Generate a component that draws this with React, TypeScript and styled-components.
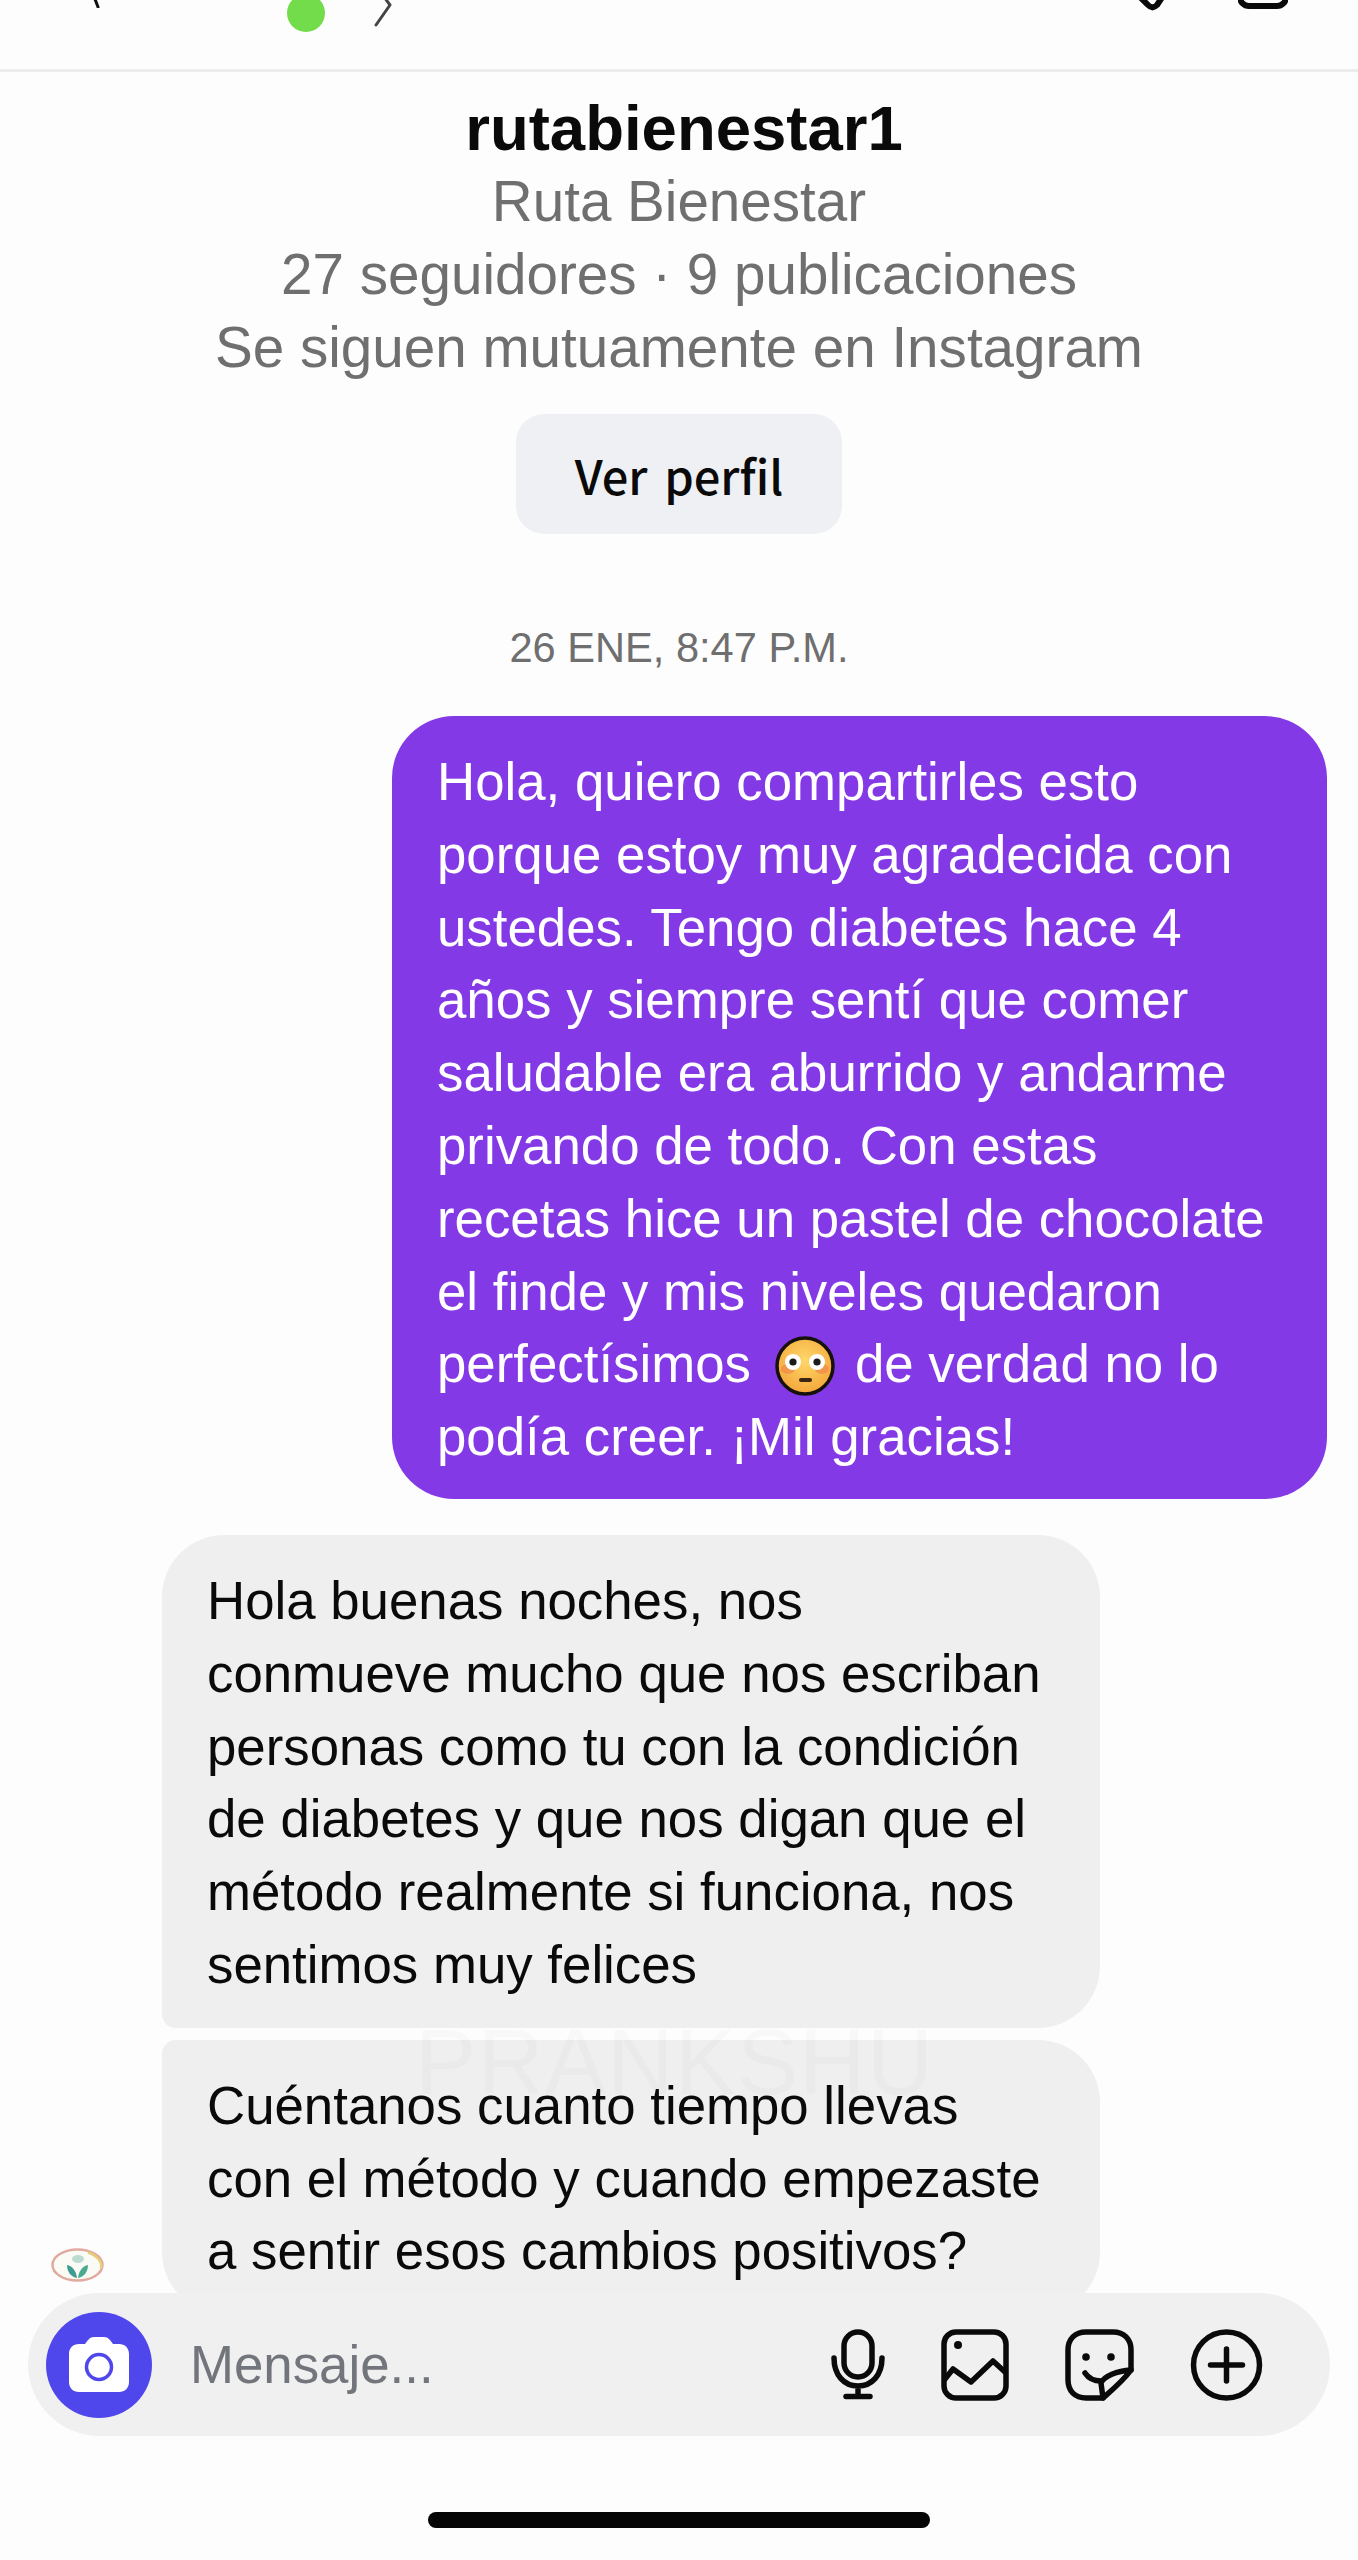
import styled, { createGlobalStyle } from "styled-components";

const colors = {
  page: "#fdfdfd",
  purple: "#8439e6",
  bubble: "#efefef",
  composer: "#f0f0f0",
  button: "#eff0f3",
  muted: "#6f6f6f",
  placeholder: "#73757c",
  camera: "#4f46ec",
  ink: "#0a0a0a",
};

const GlobalStyle = createGlobalStyle`
  html, body {
    margin: 0;
    padding: 0;
    background: ${colors.page};
  }
  * { box-sizing: border-box; }
`;

const Page = styled.div`
  width: 1358px;
  height: 2560px;
  overflow: hidden;
  display: flex;
  flex-direction: column;
  background: ${colors.page};
  font-family: "Liberation Sans", Arial, sans-serif;
  color: ${colors.ink};
`;

const TopBar = styled.header`
  height: 72px;
  flex-shrink: 0;
  border-bottom: 3px solid #ececec;
  display: flex;
  align-items: flex-start;
  overflow: hidden;
  padding-left: 90px;
  padding-right: 70px;
`;

const BackMark = styled.svg`
  margin-top: -20px;
  width: 16px;
  height: 28px;
`;

const GreenDot = styled.span`
  width: 38px;
  height: 38px;
  margin-left: 181px;
  margin-top: -6px;
  border-radius: 50%;
  background: #72dc4a;
`;

const Chevron = styled.svg`
  width: 20px;
  height: 44px;
  margin-left: 48px;
  margin-top: -17px;
`;

const TopIcons = styled.div`
  margin-left: auto;
  display: flex;
  gap: 68px;
`;

const TopIcon = styled.svg`
  width: 50px;
  height: 50px;
  margin-top: -39px;
`;

const Profile = styled.section`
  display: flex;
  flex-direction: column;
  align-items: center;
  padding-top: 20px;
`;

const Username = styled.h1`
  margin: 0 0 0 10px;
  font-size: 63.5px;
  line-height: 73px;
  font-weight: 700;
`;

const ProfileLine = styled.div`
  font-size: 56.6px;
  line-height: 73px;
  color: ${colors.muted};
`;

const ProfileButton = styled.button`
  margin-top: 30px;
  width: 326px;
  height: 120px;
  border: 0;
  border-radius: 28px;
  background: ${colors.button};
  color: ${colors.ink};
  font-family: "Noto Sans CJK KR", "Noto Sans", sans-serif;
  font-size: 47px;
  font-weight: 500;
  word-spacing: 6px;
`;

const Timestamp = styled.div`
  margin-top: 88px;
  text-align: center;
  font-size: 41.6px;
  line-height: 52px;
  color: ${colors.muted};
`;

const Thread = styled.main`
  margin-top: 42px;
  padding: 0 31px 0 162px;
  display: flex;
  flex-direction: column;
`;

const Bubble = styled.div<{ $mine?: boolean; $shape: string; $top: number; $bottom: number }>`
  position: relative;
  width: ${(p) => (p.$mine ? "935px" : "938px")};
  align-self: ${(p) => (p.$mine ? "flex-end" : "flex-start")};
  padding: ${(p) => p.$top}px 20px ${(p) => p.$bottom}px 45px;
  border-radius: ${(p) => p.$shape};
  background: ${(p) => (p.$mine ? colors.purple : colors.bubble)};
  color: ${(p) => (p.$mine ? "#ffffff" : colors.ink)};
  font-size: 52.8px;
  line-height: 72.8px;
  white-space: nowrap;
  margin-top: ${(p) => (p.$mine ? 0 : 12)}px;
`;

const MineBubble = styled(Bubble)`
  margin-bottom: 24px;
`;

const Watermark = styled.span`
  position: absolute;
  left: 253px;
  top: -24px;
  font-size: 92px;
  line-height: 92px;
  letter-spacing: 1px;
  color: rgba(0, 0, 0, 0.02);
  pointer-events: none;
`;

const Flushed = styled.svg`
  width: 60px;
  height: 60px;
  vertical-align: -14px;
  margin: 0 20px 0 24px;
`;

const Avatar = styled.svg`
  position: absolute;
  left: -112px;
  bottom: 31px;
  width: 55px;
  height: 36px;
`;

const Composer = styled.footer`
  position: relative;
  margin: -21px 28px 0;
  height: 143px;
  flex-shrink: 0;
  border-radius: 72px;
  background: ${colors.composer};
  display: flex;
  align-items: center;
  padding-left: 18px;
`;

const CameraButton = styled.div`
  width: 106px;
  height: 106px;
  border-radius: 50%;
  background: ${colors.camera};
  display: flex;
  align-items: center;
  justify-content: center;
`;

const Placeholder = styled.span`
  margin-left: 38px;
  font-size: 52.8px;
  color: ${colors.placeholder};
`;

const ComposerIcons = styled.div`
  margin-left: auto;
  margin-right: 67px;
  display: flex;
  align-items: center;
  gap: 56px;
`;

const ComposerIcon = styled.svg<{ $w: number }>`
  width: ${(p) => p.$w}px;
  height: 72px;
  fill: none;
  stroke: ${colors.ink};
  stroke-width: 5.5;
  stroke-linecap: round;
  stroke-linejoin: round;
`;

const HomeBar = styled.div`
  margin: 76px auto 0;
  width: 502px;
  height: 16px;
  border-radius: 8px;
  background: #050505;
`;

export default function App() {
  return (
    <Page>
      <GlobalStyle />
      <TopBar>
        <BackMark viewBox="0 0 16 28" fill="none" stroke="#111" strokeWidth="3" strokeLinecap="round">
          <path d="M14 1 3 14l5 13" />
        </BackMark>
        <GreenDot />
        <Chevron viewBox="0 0 20 44" fill="none" stroke="#444" strokeWidth="3" strokeLinecap="round" strokeLinejoin="round">
          <path d="M3 3 17 22 3 42" />
        </Chevron>
        <TopIcons>
          <TopIcon viewBox="0 0 50 50" fill="none" stroke="#0a0a0a" strokeWidth="6">
            <path d="M8 24 28 44c3 3 6 3 9 0l6-9" />
          </TopIcon>
          <TopIcon viewBox="0 0 50 50" fill="none" stroke="#0a0a0a" strokeWidth="6">
            <rect x="2" y="3" width="46" height="42" rx="9" />
          </TopIcon>
        </TopIcons>
      </TopBar>

      <Profile>
        <Username>rutabienestar1</Username>
        <ProfileLine>Ruta Bienestar</ProfileLine>
        <ProfileLine>27 seguidores · 9 publicaciones</ProfileLine>
        <ProfileLine>Se siguen mutuamente en Instagram</ProfileLine>
        <ProfileButton>Ver perfil</ProfileButton>
      </Profile>

      <Timestamp>26 ENE, 8:47 P.M.</Timestamp>

      <Thread>
        <MineBubble $mine $shape="62px" $top={30} $bottom={25}>
          Hola, quiero compartirles esto
          <br />
          porque estoy muy agradecida con
          <br />
          ustedes. Tengo diabetes hace 4
          <br />
          años y siempre sentí que comer
          <br />
          saludable era aburrido y andarme
          <br />
          privando de todo. Con estas
          <br />
          recetas hice un pastel de chocolate
          <br />
          el finde y mis niveles quedaron
          <br />
          perfectísimos
          <Flushed viewBox="0 0 60 60" role="img" aria-label="cara sonrojada">
            <defs>
              <radialGradient id="faceFill" cx="50%" cy="40%" r="60%">
                <stop offset="0%" stopColor="#ffd76a" />
                <stop offset="100%" stopColor="#f3a63a" />
              </radialGradient>
            </defs>
            <circle cx="30" cy="30" r="28" fill="url(#faceFill)" stroke="#17110c" strokeWidth="3.5" />
            <ellipse cx="13" cy="33" rx="7" ry="5" fill="#ef7a4a" opacity="0.55" />
            <ellipse cx="47" cy="33" rx="7" ry="5" fill="#ef7a4a" opacity="0.55" />
            <circle cx="18" cy="26" r="8" fill="#fff" />
            <circle cx="42" cy="26" r="8" fill="#fff" />
            <circle cx="18" cy="26" r="3.6" fill="#1a1a1a" />
            <circle cx="42" cy="26" r="3.6" fill="#1a1a1a" />
            <rect x="24" y="42" width="13" height="4" rx="2" fill="#3b2412" />
          </Flushed>
          de verdad no lo
          <br />
          podía creer. ¡Mil gracias!
        </MineBubble>

        <Bubble $shape="62px 62px 62px 14px" $top={30} $bottom={26}>
          Hola buenas noches, nos
          <br />
          conmueve mucho que nos escriban
          <br />
          personas como tu con la condición
          <br />
          de diabetes y que nos digan que el
          <br />
          método realmente si funciona, nos
          <br />
          sentimos muy felices
        </Bubble>

        <Bubble $shape="14px 62px 62px 62px" $top={30} $bottom={26}>
          <Watermark>PRANKSHU</Watermark>
          Cuéntanos cuanto tiempo llevas
          <br />
          con el método y cuando empezaste
          <br />a sentir esos cambios positivos?
          <Avatar viewBox="0 0 55 36" role="img" aria-label="avatar">
            <ellipse cx="27.5" cy="18" rx="25" ry="15.5" fill="#fbfbf6" stroke="#e2a9a0" strokeWidth="2.5" />
            <path d="M38 5.5a25 15.5 0 0 1 13 16" fill="none" stroke="#e5cf78" strokeWidth="2.5" />
            <path d="M27 31c-5-1-10-5-10-13 5 1 9 5 10 13Z" fill="#3f9c93" />
            <path d="M28 31c5-1 10-5 10-13-5 1-9 5-10 13Z" fill="#4aa98f" />
            <ellipse cx="28" cy="12" rx="6" ry="4" fill="#bcdcd2" />
          </Avatar>
        </Bubble>
      </Thread>

      <Composer>
        <CameraButton>
          <svg width="60" height="55" viewBox="0 0 60 55">
            <path
              d="M10 7h6l3-4c2-2 3-3 6-3h10c3 0 4 1 6 3l3 4h6c6 0 10 4 10 10v28c0 6-4 10-10 10H10C4 55 0 51 0 45V17C0 11 4 7 10 7Z"
              fill="#fff"
            />
            <circle cx="30" cy="30" r="12.5" fill="none" stroke={colors.camera} strokeWidth="3.5" />
          </svg>
        </CameraButton>
        <Placeholder>Mensaje...</Placeholder>
        <ComposerIcons>
          <ComposerIcon $w={54} viewBox="0 0 54 72">
            <rect x="13" y="3" width="28" height="45" rx="14" />
            <path d="M3 29c0 17 10 28 24 28s24-11 24-28M27 57v10M15 67.5h24" />
          </ComposerIcon>
          <ComposerIcon $w={68} viewBox="0 0 68 72">
            <rect x="3" y="3" width="62" height="66" rx="12" />
            <path d="M4 50 12 40 30 53 52 32 64 43" />
            <circle cx="17" cy="16" r="4" fill={colors.ink} stroke="none" />
          </ComposerIcon>
          <ComposerIcon $w={69} viewBox="0 0 69 72">
            <path d="M38 69H21C10 69 3 62 3 51V21C3 10 10 3 21 3h27c11 0 18 7 18 18v20" />
            <path d="M66 41C52 42 39 47 36 54l2 15C46 62 58 52 66 41Z" />
            <path d="M20 44c4 6 9 8 16 8" />
            <circle cx="21" cy="28" r="3.8" fill={colors.ink} stroke="none" />
            <circle cx="46" cy="28" r="3.8" fill={colors.ink} stroke="none" />
          </ComposerIcon>
          <ComposerIcon $w={73} viewBox="0 0 73 72">
            <circle cx="36.5" cy="36" r="33" />
            <path d="M36.5 20v32M20.5 36h32" />
          </ComposerIcon>
        </ComposerIcons>
      </Composer>

      <HomeBar />
    </Page>
  );
}
